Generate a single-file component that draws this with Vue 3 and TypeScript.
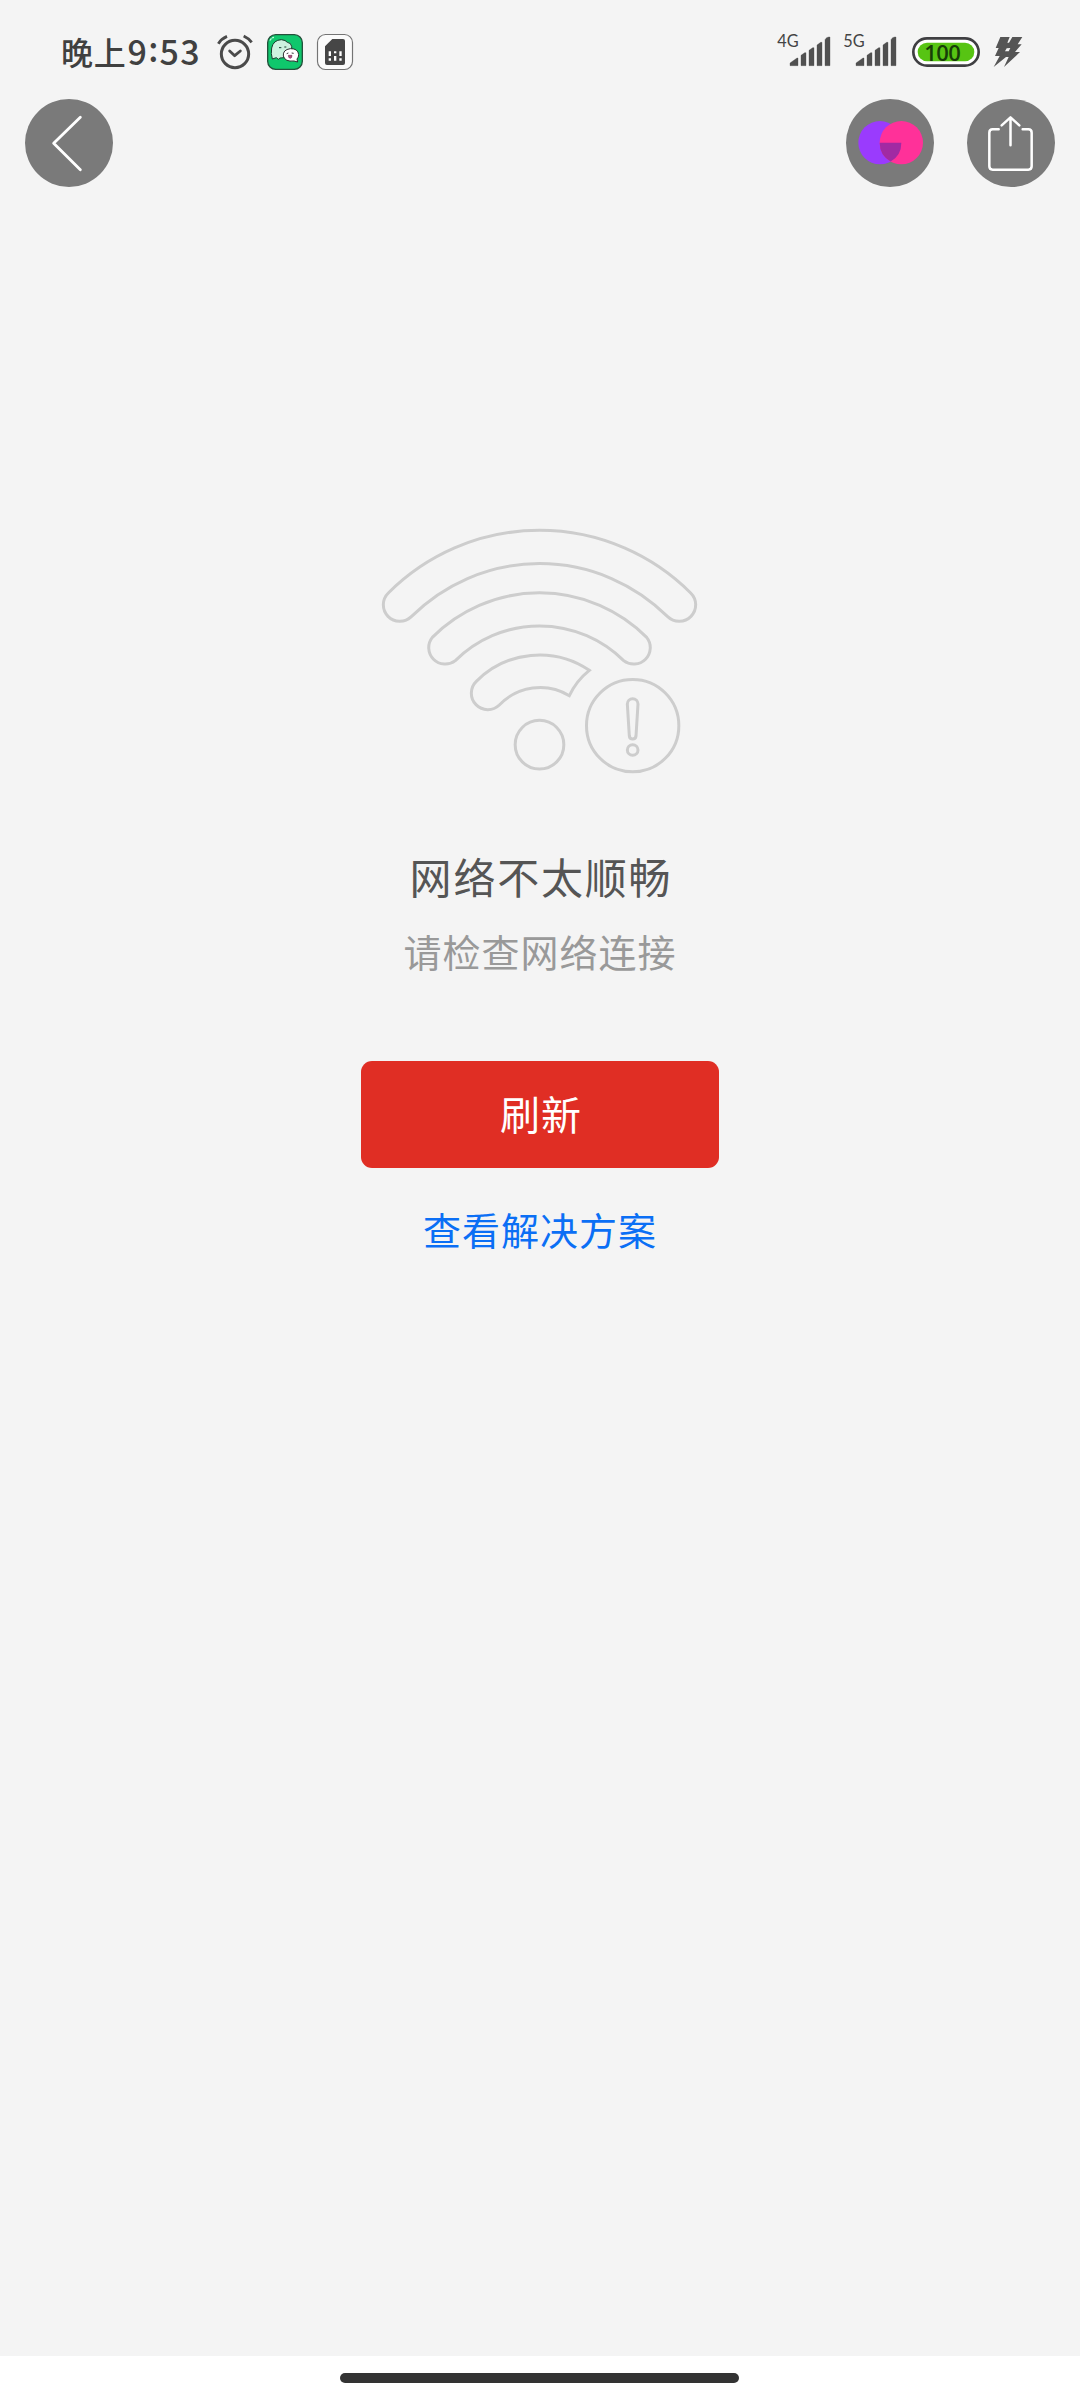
<script setup lang="ts">
const networks: string[] = ['4G', '5G']

const reload = (): void => {
  window.location.reload()
}
</script>

<template>
  <div class="screen">
    <header class="status">
      <div class="time">晚上<span class="digits">9<span class="colon">:</span>53</span></div>
      <div class="notices">
        <svg width="38" height="38" viewBox="48 39 114 114" fill="none" stroke="#4a4a4a" stroke-linecap="round" stroke-linejoin="round">
          <circle cx="105" cy="102" r="41" stroke-width="9" />
          <path d="M89 93L104 107L121 93" stroke-width="8.5" />
          <path d="M55 71Q64 56 81 49M155 67Q146 55 131 48" stroke-width="8.5" stroke-linecap="butt" />
        </svg>
        <svg width="38" height="38" viewBox="198 39 114 114">
          <rect x="203" y="44" width="104" height="104" rx="24" fill="#0fc76c" stroke="#24503b" stroke-width="4" />
          <path d="M210 62Q213 54 222 52" fill="none" stroke="#c5f5dc" stroke-width="3.5" stroke-dasharray="8 2" />
          <path d="M217 117Q212 101 215 84Q220 60 244 59Q257 60 262 67Q273 68 275 79Q277 92 272 105Q255 116 240 114L235 118L229 113Z" fill="#cdf2df" stroke="#173d2c" stroke-width="3" stroke-linejoin="round" />
          <path d="M237 83H244M253 81H259" stroke="#173d2c" stroke-width="3" />
          <path d="M271 86Q294 85 296 104Q296 112 291 117L293 126L282 123Q255 126 250 108Q248 89 271 86Z" fill="#fff" stroke="#302e30" stroke-width="3" stroke-linejoin="round" />
          <path d="M260 101L265 99M275 99L281 100" stroke="#333" stroke-width="3" />
          <path d="M265 106H276Q276 115 271 115Q265 115 265 106Z" fill="#b54b82" stroke="#5b2440" stroke-width="1.5" />
        </svg>
        <svg width="38" height="38" viewBox="348 39 114 114">
          <rect x="352.500" y="43.500" width="105" height="105" rx="24" fill="#fbfbfb" stroke="#747474" stroke-width="3.500" />
          <path d="M397 57H429Q435 57 435 63V129Q435 135 429 135H381Q375 135 375 129V79Z" fill="#464646" />
          <path d="M386 94H393V108H386ZM402 94H409V100H402ZM418 94H425V108H418ZM386 115H393V122H386ZM402 108H409V122H402ZM418 115H425V122H418Z" fill="#fff" />
        </svg>
      </div>
      <div class="system">
        <svg v-for="n in networks" :key="n" class="signal" width="57" height="42" viewBox="45 15 171 126">
          <text x="52" y="81" class="net">{{ n }}</text>
          <path d="M90 137V129L111 114H114V137ZM123 137V106L134 98H138V137ZM147 137V91L158 83H162V137ZM171 137V75L182 67H186V137ZM195 137V59Q199 51 206 51H210V137Z" fill="#505050" stroke="#505050" stroke-width="1" stroke-linejoin="round" />
        </svg>
        <svg class="battery" width="70" height="32" viewBox="63 48 210 96">
          <rect x="70" y="55" width="196" height="82" rx="41" fill="#fff" stroke="#3f3f42" stroke-width="8" />
          <rect x="83" y="68" width="170" height="56" rx="28" fill="#57c413" />
          <text x="103" y="122" class="level">100</text>
        </svg>
        <svg class="bolt" width="31" height="32" viewBox="306 48 93 96">
          <path d="M331 51H359L352 68H357L367 51H397L383 73H395L375 96H390L342 141L356 111H348L311 141L329 108H315L326 84H317Z" fill="#555" />
          <path d="M350 85L361 84L356 94H345Z" fill="#f4f4f4" />
        </svg>
      </div>
    </header>

    <nav class="nav">
      <button class="round" aria-label="返回">
        <svg width="88" height="88" viewBox="45 27 264 264" fill="none" stroke="#fff" stroke-width="8.500" stroke-linecap="round" stroke-linejoin="round">
          <path d="M211 82L131 160L211 239" />
        </svg>
      </button>
      <div class="actions">
        <button class="round" aria-label="小程序">
          <svg width="88" height="88" viewBox="48 27 264 264">
            <circle cx="150" cy="158" r="65" fill="#9a3bfd" />
            <circle cx="214" cy="158" r="65" fill="#ff3199" />
            <path d="M149 158H214A65 65 0 0 1 182 214.500A65 65 0 0 1 149 158Z" fill="#a12aa3" />
          </svg>
        </button>
        <button class="round" aria-label="分享">
          <svg width="88" height="88" viewBox="411 27 264 264" fill="none" stroke="#fff" stroke-width="7.500" stroke-linecap="round" stroke-linejoin="round">
            <path d="M506 118H488Q478 118 478 128V229Q478 239 488 239H595Q605 239 605 229V128Q605 118 595 118H578" />
            <path d="M541.500 166V83M515 106L541.500 82L568 106" />
          </svg>
        </button>
      </div>
    </nav>

    <main class="empty">
      <svg class="wifi" width="340" height="280" viewBox="0 0 1020 840" fill="none" stroke="#cdcdcd" stroke-width="9" stroke-linejoin="miter">
        <path d="M55 249A641 641 0 0 1 962 249A49.500 49.500 0 0 1 893 320A544 544 0 0 0 124 320A49.500 49.500 0 0 1 55 249Z" />
        <path d="M187 382A454 454 0 0 1 830 382A49.500 49.500 0 0 1 761 452A358 358 0 0 0 256 452A49.500 49.500 0 0 1 187 382Z" />
        <path d="M319 514A267 267 0 0 1 658 481A211 211 0 0 0 598 557A169 169 0 0 0 388 585A49.500 49.500 0 0 1 319 514Z" />
        <circle cx="508.500" cy="704" r="73" />
        <circle cx="788" cy="647" r="138.500" />
        <path d="M772 582A16 16 0 0 1 804 582L798 678Q797 687 788 687Q779 687 778 678Z" />
        <circle cx="788" cy="720" r="16" />
      </svg>
      <h1>网络不太顺畅</h1>
      <p>请检查网络连接</p>
      <button class="refresh" @click="reload">刷新</button>
      <a class="help">查看解决方案</a>
    </main>

    <footer class="home"><span class="bar"></span></footer>
  </div>
</template>

<style>
body {
  margin: 0;
  background: #f4f4f4;
}
</style>

<style scoped>
.screen {
  width: 1080px;
  height: 2400px;
  display: flex;
  flex-direction: column;
  background: #f4f4f4;
  font-family: "Noto Sans CJK SC", sans-serif;
  overflow: hidden;
}
svg {
  display: block;
}
button {
  border: 0;
  padding: 0;
  font-family: inherit;
}
.status {
  box-sizing: border-box;
  height: 99px;
  padding: 33px 57px 0 61px;
  display: flex;
  align-items: flex-start;
}
.time {
  width: 155px;
  height: 38px;
  line-height: 36px;
  font-size: 32px;
  font-weight: 500;
  letter-spacing: 0.8px;
  color: #404040;
  white-space: nowrap;
}
.digits {
  margin-left: 1px;
  font-size: 34px;
  letter-spacing: 1.2px;
}
.colon {
  position: relative;
  top: -3px;
}
.notices {
  display: flex;
  gap: 12px;
}
.system {
  display: flex;
  gap: 12px;
  margin-left: auto;
  padding-top: 1px;
}
.signal {
  margin: -9px -1px 0 -2px;
}
.net {
  font: 49px Lato, sans-serif;
  fill: #444;
}
.level {
  font: 600 66px "Open Sans", sans-serif;
  letter-spacing: -2px;
  fill: #173d08;
}
.battery {
  margin: 2px 0 0 2px;
}
.bolt {
  margin: 2px 0 0 -1px;
}
.nav {
  height: 88px;
  padding: 0 25px;
  display: flex;
  justify-content: space-between;
}
.actions {
  display: flex;
  gap: 33px;
}
.round {
  width: 88px;
  height: 88px;
  border-radius: 50%;
  background: #7a7a7a;
}
.empty {
  flex: 1;
  display: flex;
  flex-direction: column;
  align-items: center;
}
.wifi {
  margin-top: 323px;
}
h1 {
  margin: 55px 0 0 2px;
  font-size: 42px;
  line-height: 62px;
  font-weight: 400;
  letter-spacing: 1.8px;
  color: #555;
}
p {
  margin: 16px 0 0;
  font-size: 38px;
  line-height: 56px;
  letter-spacing: 1px;
  color: #999;
}
.refresh {
  box-sizing: border-box;
  width: 358px;
  height: 107px;
  margin-top: 82px;
  padding: 0 0 4px 2px;
  border-radius: 11px;
  background: #e02e24;
  color: #fff;
  font-size: 40px;
  letter-spacing: 1px;
}
.help {
  margin-top: 33px;
  font-size: 38px;
  line-height: 56px;
  letter-spacing: 1px;
  color: #0b6ff5;
}
.home {
  height: 44px;
  display: flex;
  justify-content: center;
  background: #fff;
}
.bar {
  width: 399px;
  height: 10px;
  margin: 17px 1px 0 0;
  border-radius: 5px;
  background: #333;
}
</style>
